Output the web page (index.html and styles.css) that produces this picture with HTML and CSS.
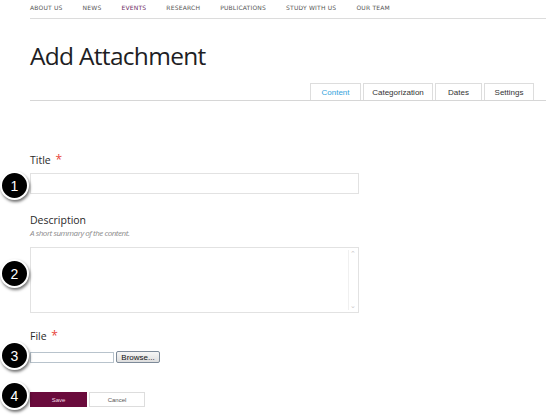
FILE: index.html
```html
<!DOCTYPE html>
<html>
<head>
<meta charset="utf-8">
<link rel="stylesheet" href="styles.css">
</head>
<body>
<div class="page">
  <nav class="topnav">
    <a>ABOUT US</a>
    <a>NEWS</a>
    <a class="active">EVENTS</a>
    <a>RESEARCH</a>
    <a>PUBLICATIONS</a>
    <a>STUDY WITH US</a>
    <a>OUR TEAM</a>
  </nav>
  <header class="head">
    <h1>Add Attachment</h1>
    <div class="tabs">
      <span class="tab current">Content</span>
      <span class="tab">Categorization</span>
      <span class="tab">Dates</span>
      <span class="tab">Settings</span>
    </div>
  </header>

  <div class="field f-title">
    <label class="lbl">Title <span class="req">*</span></label>
    <div class="anchor">
      <span class="badge b1">1</span>
      <div class="input"></div>
    </div>
  </div>

  <div class="field f-desc">
    <label class="lbl">Description</label>
    <div class="help">A short summary of the content.</div>
    <div class="anchor">
      <span class="badge b2">2</span>
      <div class="textarea">
        <div class="sb"><span class="arr">&#8963;</span><span class="arr">&#8964;</span></div>
      </div>
    </div>
  </div>

  <div class="field f-file">
    <label class="lbl">File <span class="req">*</span></label>
    <div class="anchor filerow">
      <span class="badge b3">3</span>
      <div class="fileinput"></div>
      <span class="browse">Browse...</span>
    </div>
  </div>

  <div class="anchor actions">
    <span class="badge b4">4</span>
    <span class="btn save">Save</span>
    <span class="btn cancel">Cancel</span>
  </div>
</div>
</body>
</html>
```
FILE: styles.css
```css
* { box-sizing: border-box; }
html, body { margin: 0; padding: 0; background: #fff; }
body { font-family: "Open Sans", "Liberation Sans", sans-serif; color: #333; }
.page { width: 560px; height: 417px; padding: 0 14px 0 30px; overflow: hidden; }

.topnav {
  display: flex; gap: 20px; height: 19px; padding-top: 4px;
  border-bottom: 1px solid #dcdcdc;
  font-family: "DejaVu Sans", sans-serif; font-size: 6px; letter-spacing: 0.2px;
  color: #555;
}
.topnav .active { color: #6d2a64; }

.head { border-bottom: 1px solid #d6d6d6; height: 82px; display: flex; flex-direction: column; }
.head h1 {
  margin: 22px 0 0; font-weight: 400; font-size: 24.5px; letter-spacing: -0.7px;
  color: #1e1e24; line-height: 30px;
}
.tabs { margin-top: auto; align-self: flex-end; display: flex; gap: 2px; padding-right: 12px; }
.tab {
  border: 1px solid #ddd; border-bottom: none; height: 17px;
  font-family: "Liberation Sans", Arial, sans-serif; font-size: 8px; color: #333;
  display: flex; align-items: center; justify-content: center;
}
.tab:nth-child(1) { width: 51px; color: #34a3dc; }
.tab:nth-child(2) { width: 70px; }
.tab:nth-child(3) { width: 47px; }
.tab:nth-child(4) { width: 50px; }

.lbl { display: block; font-size: 10.5px; color: #2a2a2a; line-height: 14px; }
.req { color: #e8453c; font-size: 12px; margin-left: 2px; }
.anchor { position: relative; }

.f-title { margin-top: 52px; }
.f-title .anchor { margin-top: 6px; }
.input { width: 329px; height: 21px; border: 1px solid #e2e2e2; }

.f-desc { margin-top: 19px; }
.help { font-size: 8px; font-style: italic; color: #8a8a8a; letter-spacing: -0.45px; line-height: 12px; }
.f-desc .anchor { margin-top: 8px; }
.textarea { width: 329px; height: 66px; border: 1px solid #e2e2e2; display: flex; justify-content: flex-end; }
.sb { width: 9px; margin: 2px 1px; border-left: 1px solid #f0f0f0; display: flex; flex-direction: column; justify-content: space-between; }
.arr { font-size: 7px; color: #c8c8c8; line-height: 8px; text-align: center; }

.f-file { margin-top: 16px; }
.filerow { display: flex; align-items: center; gap: 2px; margin-top: 8px; }
.fileinput { width: 84px; height: 11px; border: 1px solid #b8c3cc; background: #fff; }
.browse {
  width: 44px; height: 12px; border: 1px solid #7d8a99; border-radius: 2px;
  background: linear-gradient(#f6f6f6, #dedede);
  font-family: "Liberation Sans", Arial, sans-serif; font-size: 8px; color: #111;
  display: flex; align-items: center; justify-content: center;
}

.actions { display: flex; gap: 2px; margin-top: 29px; }
.btn {
  height: 15px; display: flex; align-items: center; justify-content: center;
  font-family: "Liberation Sans", Arial, sans-serif; font-size: 6px;
}
.save { width: 57px; background: #6a0b3c; color: #f3dce6; }
.cancel { width: 56px; border: 1px solid #ddd; color: #555; }

.badge {
  position: absolute; left: -30px; width: 29px; height: 29px; border-radius: 50%;
  background: #000; border: 2px solid #fff; box-shadow: 1px 2px 3px rgba(0,0,0,0.55);
  color: #fff; font-family: "Liberation Sans", Arial, sans-serif; font-size: 14px;
  display: flex; align-items: center; justify-content: center;
}
.b1 { top: -2px; }
.b2 { top: 12px; }
.b3 { top: -10px; }
.b4 { top: -11px; }
```
